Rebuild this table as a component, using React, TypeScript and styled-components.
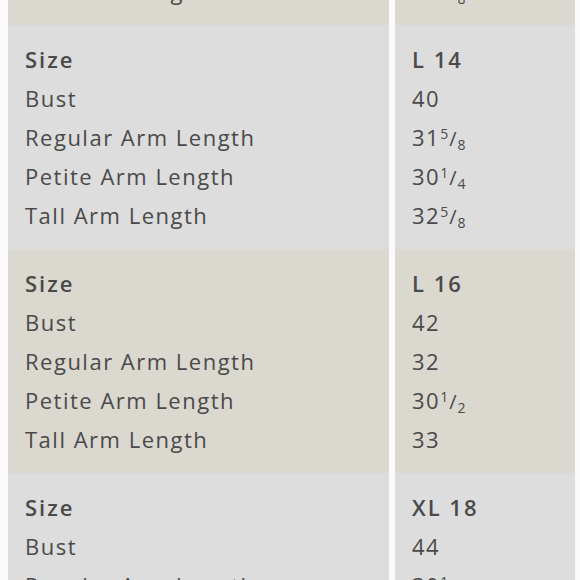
import React from "react";
import styled, { createGlobalStyle } from "styled-components";

const GlobalStyle = createGlobalStyle`
  html, body {
    margin: 0;
    padding: 0;
    background: #fafafa;
    overflow: hidden;
  }
`;

const Page = styled.div`
  width: 580px;
  height: 580px;
  overflow: hidden;
`;

// the chart is scrolled partway, so the first block is cut off at the top
const Chart = styled.div`
  margin-top: -199px;
  padding-left: 8px;
  display: flex;
  flex-direction: column;
  font-family: "Open Sans", "Lato", sans-serif;
  color: #4a4a4a;
`;

const Block = styled.div`
  display: grid;
  grid-template-columns: 381px 180px;
  column-gap: 6px;
`;

const Column = styled.div<{ $tone: "beige" | "gray" }>`
  background: ${(p) => (p.$tone === "beige" ? "#dbd8d0" : "#dddddd")};
  padding: 15px 0 14px 17px;
  display: flex;
  flex-direction: column;
`;

const Cell = styled.div<{ $bold?: boolean }>`
  height: 39px;
  line-height: 39px;
  font-size: 22px;
  letter-spacing: ${(p) => (p.$bold ? "2px" : "1.5px")};
  font-weight: ${(p) => (p.$bold ? 600 : 400)};
  white-space: nowrap;
`;

const Num = styled.sup`
  font-size: 14px;
  vertical-align: 7px;
  line-height: 0;
  letter-spacing: 0;
`;

const Slash = styled.span`
  font-size: 20px;
  margin: 0 1px;
  letter-spacing: 0;
`;

const Den = styled.sub`
  font-size: 14px;
  vertical-align: -4px;
  line-height: 0;
`;

type Measure = { whole: string; frac?: [string, string] };

type SizeBlock = {
  size: string;
  bust: string;
  regular: Measure;
  petite: Measure;
  tall: Measure;
};

const blocks: SizeBlock[] = [
  {
    size: "L 12",
    bust: "38",
    regular: { whole: "31", frac: ["1", "4"] },
    petite: { whole: "30" },
    tall: { whole: "32", frac: ["1", "8"] },
  },
  {
    size: "L 14",
    bust: "40",
    regular: { whole: "31", frac: ["5", "8"] },
    petite: { whole: "30", frac: ["1", "4"] },
    tall: { whole: "32", frac: ["5", "8"] },
  },
  {
    size: "L 16",
    bust: "42",
    regular: { whole: "32" },
    petite: { whole: "30", frac: ["1", "2"] },
    tall: { whole: "33" },
  },
  {
    size: "XL 18",
    bust: "44",
    regular: { whole: "30", frac: ["1", "2"] },
    petite: { whole: "30", frac: ["3", "4"] },
    tall: { whole: "33", frac: ["1", "2"] },
  },
];

const Value = ({ m }: { m: Measure }) => (
  <Cell>
    {m.whole}
    {m.frac && (
      <>
        <Num>{m.frac[0]}</Num>
        <Slash>/</Slash>
        <Den>{m.frac[1]}</Den>
      </>
    )}
  </Cell>
);

const App = () => {
  return (
    <Page>
      <GlobalStyle />
      <Chart>
        {blocks.map((b, i) => {
          const tone = i % 2 === 0 ? "beige" : "gray";
          return (
            <Block key={b.size}>
              <Column $tone={tone}>
                <Cell $bold>Size</Cell>
                <Cell>Bust</Cell>
                <Cell>Regular Arm Length</Cell>
                <Cell>Petite Arm Length</Cell>
                <Cell>Tall Arm Length</Cell>
              </Column>
              <Column $tone={tone}>
                <Cell $bold>{b.size}</Cell>
                <Cell>{b.bust}</Cell>
                <Value m={b.regular} />
                <Value m={b.petite} />
                <Value m={b.tall} />
              </Column>
            </Block>
          );
        })}
      </Chart>
    </Page>
  );
};

export default App;
